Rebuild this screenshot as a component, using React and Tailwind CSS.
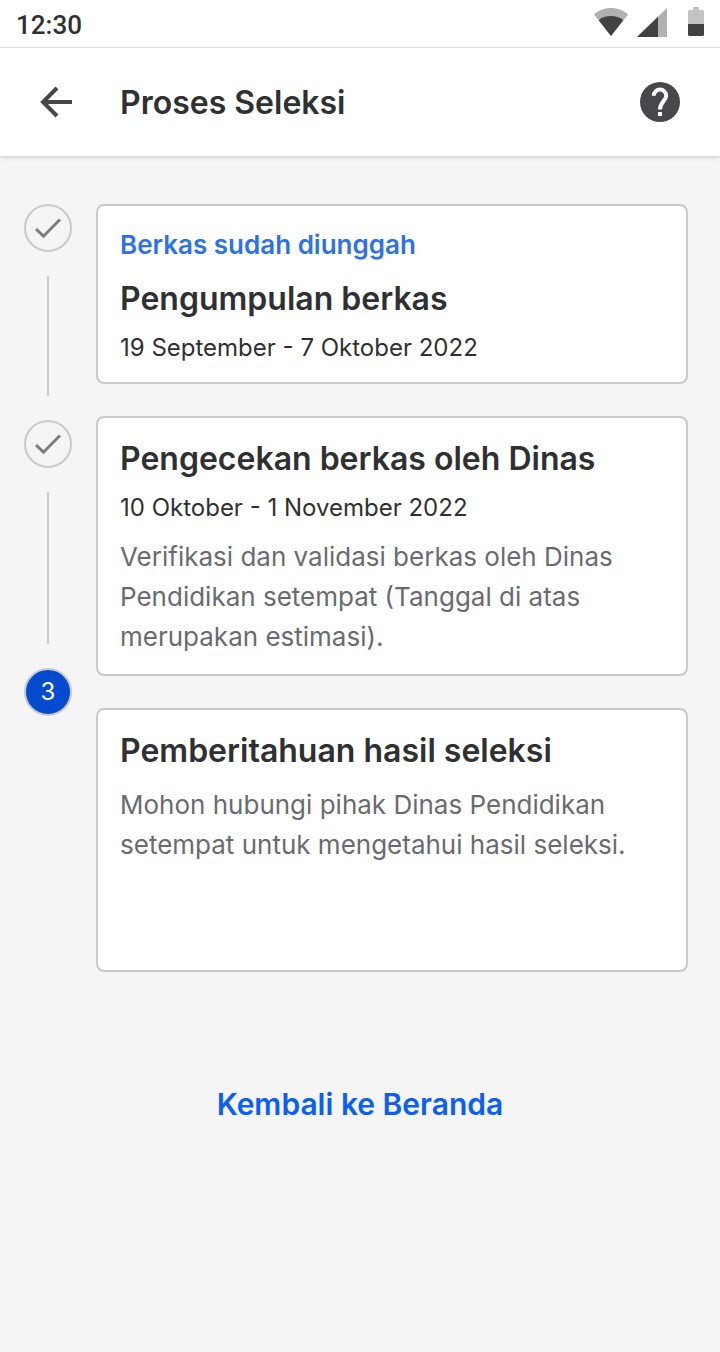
import React from "react";

const steps = [
    {
        status: "Berkas sudah diunggah",
        title: "Pengumpulan berkas",
        date: "19 September - 7 Oktober 2022",
    },
    {
        title: "Pengecekan berkas oleh Dinas",
        date: "10 Oktober - 1 November 2022",
        description: "Verifikasi dan validasi berkas oleh Dinas Pendidikan setempat (Tanggal di atas merupakan estimasi).",
    },
    {
        title: "Pemberitahuan hasil seleksi",
        description: "Mohon hubungi pihak Dinas Pendidikan setempat untuk mengetahui hasil seleksi.",
    },
];

function StatusBar() {
    return (
        <div className="flex h-12 items-start justify-between border-b border-[#ebebeb] bg-white px-4 pt-2">
            <span className="font-['Roboto',sans-serif] text-[26px] leading-[34px] font-medium text-[#2f3031]">12:30</span>
            <div className="flex items-start">
                <svg width="34" height="28" viewBox="0 0 34 28" className="mr-[9px]" aria-hidden="true">
                    <path d="M0 6.500C4.500 2.300 10.500 0 17 0S29.500 2.300 34 6.500L17 28Z" fill="#b0b0b0" />
                    <path d="M4.700 12.200C8 9.400 12.300 8 17 8s9 1.400 12.300 4.200L17 28Z" fill="#424242" />
                </svg>
                <svg width="30" height="29" viewBox="0 0 30 29" className="mr-[21px]" aria-hidden="true">
                    <path d="M30 0V29H0Z" fill="#b0b0b0" />
                    <path d="M21 8.700V29H0Z" fill="#424242" />
                </svg>
                <svg width="16" height="28" viewBox="0 0 16 28" className="overflow-visible" aria-hidden="true">
                    <path d="M5 -1h6v3h3.500A1.500 1.500 0 0 1 16 3.500V16H0V3.500A1.500 1.500 0 0 1 1.500 2H5Z" fill="#c4c4c4" />
                    <path d="M0 16h16v10.500a1.500 1.500 0 0 1-1.500 1.500h-13A1.500 1.500 0 0 1 0 26.500Z" fill="#424242" />
                </svg>
            </div>
        </div>
    );
}

function Header() {
    return (
        <header className="flex h-27 items-center bg-white px-10 shadow-[0_1px_4px_rgba(0,0,0,0.2)]">
            <button type="button" aria-label="Kembali" className="mr-12 cursor-pointer">
                <svg width="32" height="32" viewBox="0 0 32 32" fill="none" stroke="#47484c" strokeWidth="4" className="block">
                    <path d="M17 2L3 16L17 30M3 16H32" />
                </svg>
            </button>
            <h1 className="flex-1 pt-[2px] text-[32px] leading-10 font-semibold">Proses Seleksi</h1>
            <button type="button" aria-label="Bantuan" className="cursor-pointer">
                <svg width="40" height="40" viewBox="0 0 40 40" className="block">
                    <circle cx="20" cy="20" r="20" fill="#47484c" />
                    <path d="M13.800 13.800A6.200 6.200 0 0 1 26.200 13.800C26.200 18.500 20 20 20 27.500" fill="none" stroke="#fff" strokeWidth="4" />
                    <rect x="18" y="30" width="4" height="4" fill="#fff" />
                </svg>
            </button>
        </header>
    );
}

function DoneCircle() {
    return (
        <div className="flex size-12 items-center justify-center rounded-full border-2 border-[#c9c9ce]">
            <svg width="28" height="22" viewBox="0 0 28 22" fill="none" stroke="#7c7d80" strokeWidth="3" aria-hidden="true">
                <path d="M2 12L9.500 19.200L26 2.500" />
            </svg>
        </div>
    );
}

function StepCard({ status, title, date, description }) {
    return (
        <li className="rounded-lg border-2 border-[#c9c9ce] bg-white px-[22px] pt-[21px] pb-[17px] last:min-h-[264px]">
            {status && <p className="mb-4 text-[26px] leading-9 font-semibold text-[#2c71e8]">{status}</p>}
            <h2 className="text-[32px] leading-10 font-semibold">{title}</h2>
            {date && <p className="mt-3 text-2xl leading-[34px]">{date}</p>}
            {description && (
                <p className={`text-[26px] leading-10 text-[#696b70] ${date ? "mt-3" : "mt-[14px]"}`}>{description}</p>
            )}
        </li>
    );
}

function App() {
    return (
        <div className="min-h-screen bg-[#f5f5f5] font-['Inter',sans-serif] text-[#2f3031]">
            <StatusBar />
            <Header />

            <main className="pt-12 pr-8 pl-6">
                <div className="flex items-start gap-6">
                    <div className="flex flex-col items-center gap-6">
                        <DoneCircle />
                        <div className="h-30 w-[2px] bg-[#c9c9ce]" />
                        <DoneCircle />
                        <div className="h-38 w-[2px] bg-[#c9c9ce]" />
                        <div className="flex size-12 items-center justify-center rounded-full border-2 border-[#c9c9ce] bg-[#054bd0] text-2xl text-white">
                            3
                        </div>
                    </div>

                    <ol className="flex flex-1 flex-col gap-8">
                        {steps.map(step => (
                            <StepCard key={step.title} {...step} />
                        ))}
                    </ol>
                </div>
            </main>

            <div className="flex justify-center pt-28 pb-12">
                <a href="#beranda" className="text-[30px] leading-10 font-semibold text-[#0b5ff2]">
                    Kembali ke Beranda
                </a>
            </div>
        </div>
    );
}

export default App;
